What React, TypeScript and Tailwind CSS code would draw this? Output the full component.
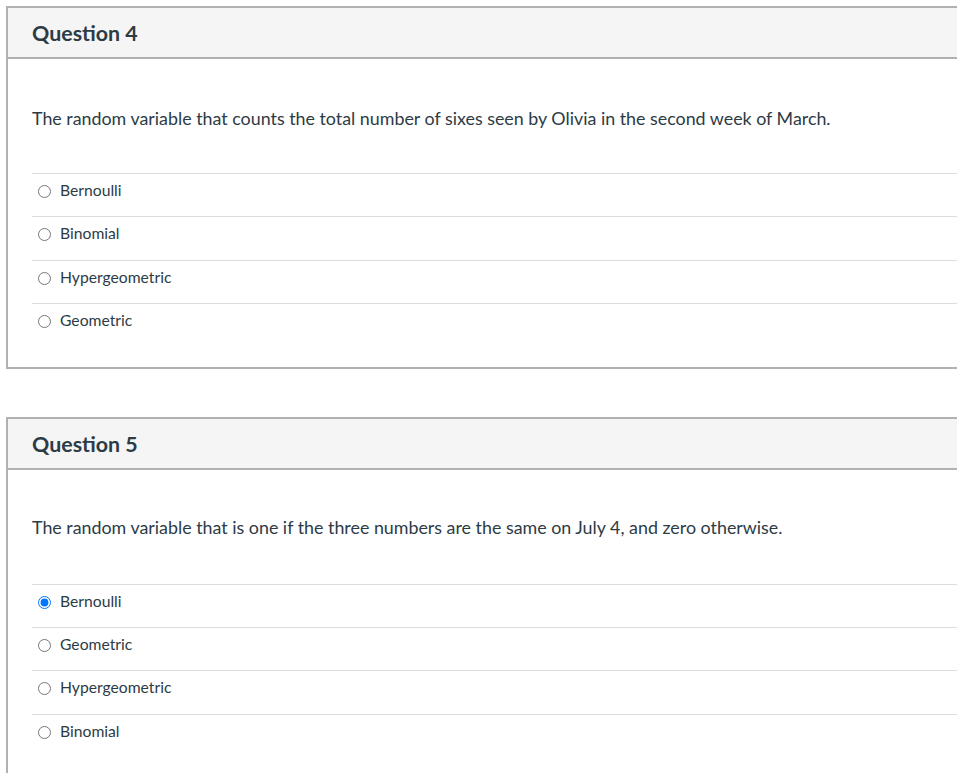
import React from "react";

type Q = { title: string; text: string; options: string[]; checked?: number; bodyPt: string; gapTop: string };

const questions: Q[] = [
  {
    title: "Question 4",
    text: "The random variable that counts the total number of sixes seen by Olivia in the second week of March.",
    options: ["Bernoulli", "Binomial", "Hypergeometric", "Geometric"],
    bodyPt: "pt-[47px]",
    gapTop: "mt-[43px]",
  },
  {
    title: "Question 5",
    text: "The random variable that is one if the three numbers are the same on July 4, and zero otherwise.",
    options: ["Bernoulli", "Geometric", "Hypergeometric", "Binomial"],
    checked: 0,
    bodyPt: "pt-[45px]",
    gapTop: "mt-[45px]",
  },
];

function Panel({ q, idx }: { q: Q; idx: number }) {
  return (
    <div className="w-[1000px] border-l-2 border-t-2 border-b-2 border-[#b1b1b1] bg-white">
      <div className="h-[51px] bg-[#f5f5f5] border-b-2 border-[#b1b1b1] pl-[24px] flex items-center">
        <h2 className="text-[21.4px] font-bold text-[#2d3b45] leading-[24px] pt-[1px]">{q.title}</h2>
      </div>
      <div className={`${q.bodyPt} pl-[24px] pb-[20px]`}>
        <p className="text-[17.85px] leading-[24px] text-[#2d3b45]">{q.text}</p>
        <div className={q.gapTop}>
          {q.options.map((o, i) => (
            <label
              key={o}
              className="h-[43.4px] border-t-[1.5px] border-[#dcdcdc] flex items-start pt-[6px] pl-[6px] text-[15.7px] leading-[20px] text-[#2d3b45]"
            >
              <input
                type="radio"
                name={`q${idx}`}
                defaultChecked={q.checked === i}
                className="w-[13px] h-[13px] m-0 mt-[5px] mr-[9px]"
              />
              <span>{o}</span>
            </label>
          ))}
        </div>
      </div>
    </div>
  );
}

export default function App() {
  return (
    <div
      className="w-[957px] h-[773px] overflow-hidden bg-white pt-[6px] pl-[6px]"
      style={{ fontFamily: "Lato, 'Noto Sans', sans-serif" }}
    >
      <div className="flex flex-col gap-[48px]">
        {questions.map((q, i) => (
          <Panel key={q.title} q={q} idx={i} />
        ))}
      </div>
    </div>
  );
}
